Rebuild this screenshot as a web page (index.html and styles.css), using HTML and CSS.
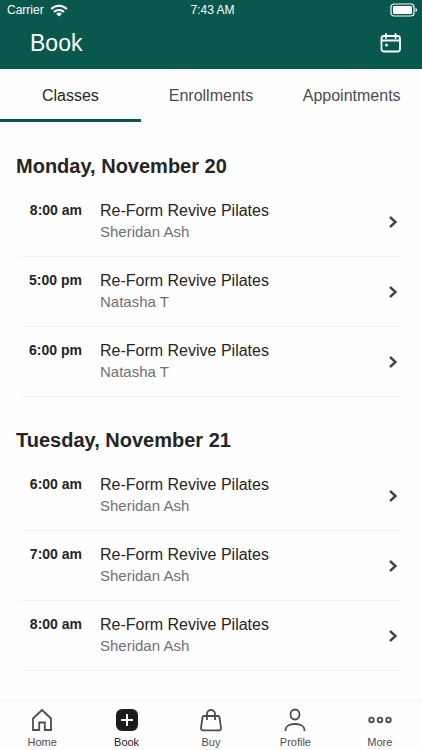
FILE: index.html
```html
<!DOCTYPE html>
<html lang="en">
<head>
<meta charset="utf-8">
<meta name="viewport" content="width=device-width, initial-scale=1">
<title>Book</title>
<link rel="stylesheet" href="styles.css">
</head>
<body>
<svg class="sprite" aria-hidden="true">
  <symbol id="chevron" viewBox="0 0 10 14"><path d="M2 2 7.500 7 2 12" fill="none" stroke="currentColor" stroke-width="2.400"/></symbol>
</svg>
<div class="app">
  <header class="header">
    <div class="status">
      <div class="carrier"><span>Carrier</span>
        <svg width="18" height="13" viewBox="0 0 18 13" fill="none" stroke="currentColor" stroke-width="2"><path d="M1.200 5a11 11 0 0 1 15.600 0M4 8a7 7 0 0 1 10 0"/><path d="M9 12.500 6.200 9.900a4 4 0 0 1 5.600 0z" fill="currentColor" stroke="none"/></svg>
      </div>
      <span class="clock">7:43 AM</span>
      <svg class="battery" width="28" height="14" viewBox="0 0 28 14"><rect x="1" y="1" width="23" height="12" rx="3" fill="none" stroke="currentColor" stroke-width="1.200"/><rect x="3" y="3" width="19" height="8" rx="1" fill="currentColor"/><path d="M25.500 5c2 .5 2 3.500 0 4z" fill="currentColor"/></svg>
    </div>
    <div class="titlebar">
      <h1>Book</h1>
      <button class="calendar" aria-label="Calendar">
        <svg width="22" height="20" viewBox="0 0 22 20" fill="none" stroke="currentColor" stroke-width="1.800" stroke-linecap="round"><rect x="1.500" y="3" width="18.500" height="15.500" rx="2.500"/><path d="M1.500 7.500H20M6 1v4M15.500 1v4"/><circle cx="6.500" cy="12" r="1.500" fill="currentColor" stroke="none"/></svg>
      </button>
    </div>
  </header>
  <nav class="tabs">
    <a class="tab active" href="#classes">Classes</a>
    <a class="tab" href="#enrollments">Enrollments</a>
    <a class="tab" href="#appointments">Appointments</a>
  </nav>
  <main class="schedule">
    <section class="day">
      <h2>Monday, November 20</h2>
      <ul>
        <li><a class="row" href="#c1"><time>8:00 am</time><span class="info"><span class="name">Re-Form Revive Pilates</span><span class="teacher">Sheridan Ash</span></span><svg class="chevron"><use href="#chevron"/></svg></a></li>
        <li><a class="row" href="#c2"><time>5:00 pm</time><span class="info"><span class="name">Re-Form Revive Pilates</span><span class="teacher">Natasha T</span></span><svg class="chevron"><use href="#chevron"/></svg></a></li>
        <li><a class="row" href="#c3"><time>6:00 pm</time><span class="info"><span class="name">Re-Form Revive Pilates</span><span class="teacher">Natasha T</span></span><svg class="chevron"><use href="#chevron"/></svg></a></li>
      </ul>
    </section>
    <section class="day">
      <h2>Tuesday, November 21</h2>
      <ul>
        <li><a class="row" href="#c4"><time>6:00 am</time><span class="info"><span class="name">Re-Form Revive Pilates</span><span class="teacher">Sheridan Ash</span></span><svg class="chevron"><use href="#chevron"/></svg></a></li>
        <li><a class="row" href="#c5"><time>7:00 am</time><span class="info"><span class="name">Re-Form Revive Pilates</span><span class="teacher">Sheridan Ash</span></span><svg class="chevron"><use href="#chevron"/></svg></a></li>
        <li><a class="row" href="#c6"><time>8:00 am</time><span class="info"><span class="name">Re-Form Revive Pilates</span><span class="teacher">Sheridan Ash</span></span><svg class="chevron"><use href="#chevron"/></svg></a></li>
      </ul>
    </section>
  </main>
  <nav class="bottom">
    <a class="item" href="#home"><svg viewBox="0 0 24 24"><path d="M3 10.500 12 2l9 8.500V22h-6.200v-7.500H9.200V22H3z"/></svg><span>Home</span></a>
    <a class="item active" href="#book"><svg viewBox="0 0 24 24"><rect x="1" y="1" width="22" height="22" rx="6" fill="currentColor" stroke="none"/><path d="M12 6v12M6 12h12" stroke="#fff" stroke-width="2"/></svg><span>Book</span></a>
    <a class="item" href="#buy"><svg viewBox="0 0 24 24"><path d="M5 8h14a1.500 1.500 0 0 1 1.500 1.300L22 20a2 2 0 0 1-2 2.300H4A2 2 0 0 1 2 20L3.500 9.300A1.500 1.500 0 0 1 5 8zM8 12V6a4 4 0 0 1 8 0v6"/></svg><span>Buy</span></a>
    <a class="item" href="#profile"><svg viewBox="0 0 24 24"><ellipse cx="12" cy="6.500" rx="4.500" ry="5"/><path d="M2.500 23v-1c0-3.500 3.500-6 9.500-6s9.500 2.500 9.500 6v1"/></svg><span>Profile</span></a>
    <a class="item" href="#more"><svg viewBox="0 0 24 24"><circle cx="3.500" cy="12" r="2.300"/><circle cx="12" cy="12" r="2.300"/><circle cx="20.500" cy="12" r="2.300"/></svg><span>More</span></a>
  </nav>
</div>
</body>
</html>
```
FILE: styles.css
```css
* { box-sizing: border-box; }
body {
  margin: 0;
  background: #fefefe;
  color: #252525;
  font-family: "Liberation Sans", Arial, sans-serif;
  font-size: 16px;
}
a { color: inherit; text-decoration: none; }
h1, h2, ul { margin: 0; padding: 0; }
ul { list-style: none; }
svg { display: block; }
.sprite { display: none; }
.app { display: flex; flex-direction: column; min-height: 100vh; }
.header { background: #08584e; color: #fff; padding-bottom: 3px; }
.status {
  display: grid;
  grid-template-columns: 1fr auto 1fr;
  align-items: center;
  height: 20px;
  padding: 0 4px 0 7px;
  font-size: 12px;
}
.carrier { display: flex; align-items: center; gap: 6px; }
.battery { justify-self: end; }
.titlebar {
  display: flex;
  align-items: center;
  justify-content: space-between;
  height: 46px;
  padding: 0 20px 0 30px;
}
h1 { font-size: 23px; font-weight: 400; }
.calendar { padding: 0; border: 0; background: none; color: inherit; }
.tabs { display: grid; grid-template-columns: repeat(3, 1fr); height: 53px; }
.tab {
  display: flex;
  align-items: center;
  justify-content: center;
  padding-top: 3px;
  border-bottom: 3px solid transparent;
  color: #4c4c52;
}
.tab.active { border-color: #08584e; color: #252525; }
.schedule { flex: 1; padding: 32px 22px 0 16px; }
.day + .day { margin-top: 31px; }
h2 { font-size: 20px; line-height: 24px; }
.day ul { padding: 9px 0 0 5px; }
.row {
  display: grid;
  grid-template-columns: 61px 1fr auto;
  column-gap: 18px;
  height: 70px;
  padding-top: 13px;
  border-bottom: 1px solid #f2f2f2;
}
time { font-size: 14px; font-weight: 700; line-height: 21px; text-align: right; }
.info { display: flex; flex-direction: column; line-height: 21px; }
.teacher { font-size: 15px; color: #707078; }
.chevron { width: 10px; height: 14px; margin-top: 15px; margin-right: 2px; color: #444; }
.bottom {
  position: sticky;
  bottom: 0;
  display: grid;
  grid-template-columns: repeat(5, 1fr);
  height: 50px;
  border-top: 1px solid #f4f4f4;
  background: #fefefe;
  color: #4c4c52;
  font-size: 11px;
}
.item { display: flex; flex-direction: column; align-items: center; padding-top: 7px; gap: 4px; line-height: 13px; }
.item svg { width: 24px; height: 24px; fill: none; stroke: currentColor; stroke-width: 1.8; }
.item.active { color: #1c1c20; }
```
